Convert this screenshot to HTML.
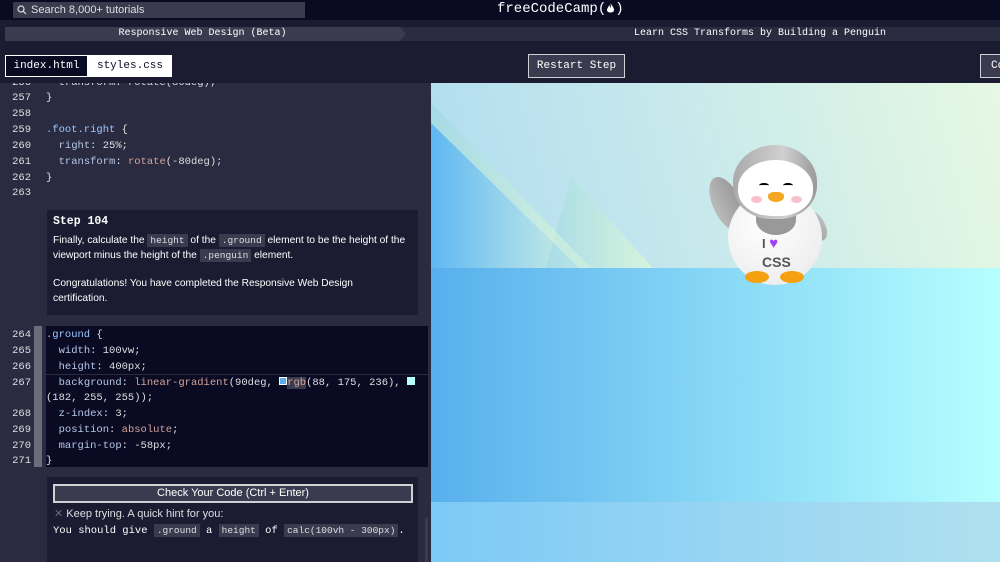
<!DOCTYPE html>
<html><head><meta charset="utf-8"><style>
*{box-sizing:border-box;margin:0;padding:0}
body{width:1000px;height:562px;overflow:hidden;background:#1b1b32;font-family:"Liberation Sans",sans-serif;position:relative}
.abs{position:absolute}
.mono{font-family:"Liberation Mono","DejaVu Sans Mono",monospace}
.c{position:absolute;left:46px;font-family:"Liberation Mono",monospace;font-size:10.5px;color:#dfdfe2;white-space:pre;line-height:16px}
.n{position:absolute;left:0;width:31px;text-align:right;font-family:"Liberation Mono",monospace;font-size:10.5px;color:#dfdfe2;line-height:16px}
.sel{color:#99c9ff}.k{color:#b5c7e8}.f{color:#d4a49a}
.ic{background:#3b3b4f;font-family:"Liberation Mono",monospace;font-size:9.5px;padding:1px 3px;color:#dfdfe2}
</style></head><body>
<div class="abs" style="left:0;top:0;width:1000px;height:20px;background:#0a0a23"></div>
<div class="abs" style="left:13px;top:2px;width:292px;height:16px;background:#3b3b4f;color:#dfdfe2;font-size:11px;line-height:16px;padding-left:18px">Search 8,000+ tutorials</div>
<svg class="abs" style="left:17px;top:5px" width="10" height="10"><circle cx="4" cy="4" r="3" stroke="#dfdfe2" stroke-width="1.2" fill="none"/><path d="M6.3 6.3L9 9" stroke="#dfdfe2" stroke-width="1.2"/></svg>
<div class="abs mono" style="left:497px;top:0;font-size:14px;line-height:19px;color:#fff">freeCodeCamp(<svg width="9" height="11" viewBox="0 0 9 11" style="vertical-align:-1px"><path d="M4.5 0.5C5 3 8 5 8 8C8 10 6 10.5 4.5 10.5C3 10.5 1 10 1 8C1 6 3 5 3 3C4 4 4 5 4.5 6C5 5 5 3 4.5 0.5Z" fill="#fff"/></svg>)</div>
<div class="abs" style="left:5px;top:27px;width:995px;height:14px;background:#2a2a40"></div>
<div class="abs mono" style="left:5px;top:27px;width:395px;height:14px;background:#3b3b4f;color:#fff;font-size:10px;line-height:14px;text-align:center">Responsive Web Design (Beta)</div>
<div class="abs" style="left:400px;top:27px;width:0;height:0;border-top:7px solid transparent;border-bottom:7px solid transparent;border-left:6px solid #3b3b4f"></div>
<div class="abs mono" style="left:520px;top:27px;width:480px;color:#fff;font-size:10px;line-height:14px;text-align:center">Learn CSS Transforms by Building a Penguin</div>
<div class="abs mono" style="left:5px;top:55px;width:83px;height:22px;background:#0a0a23;border:1px solid #fff;color:#fff;font-size:11px;line-height:20px;text-align:center">index.html</div>
<div class="abs mono" style="left:88px;top:55px;width:84px;height:22px;background:#fff;color:#0a0a23;font-size:11px;line-height:22px;text-align:center">styles.css</div>
<div class="abs mono" style="left:528px;top:54px;width:97px;height:24px;background:#3b3b4f;border:1px solid #d0d0d5;color:#fff;font-size:11px;line-height:22px;text-align:center">Restart Step</div>
<div class="abs mono" style="left:980px;top:54px;width:40px;height:24px;background:#3b3b4f;border:1px solid #d0d0d5;color:#fff;font-size:11px;line-height:22px;padding-left:10px">Co</div>
<div class="abs" style="left:0;top:83px;width:431px;height:479px;background:#2a2a40;overflow:hidden">
 <div class="n" style="top:-8px">256</div><div class="c" style="top:-8px">  transform: rotate(80deg);</div>
 <div class="n" style="top:7px">257</div><div class="c" style="top:7px">}</div>
 <div class="n" style="top:23px">258</div>
 <div class="n" style="top:39px">259</div><div class="c" style="top:39px"><span class="sel">.foot.right</span> {</div>
 <div class="n" style="top:55px">260</div><div class="c" style="top:55px">  <span class="k">right</span>: 25%;</div>
 <div class="n" style="top:71px">261</div><div class="c" style="top:71px">  <span class="k">transform</span>: <span class="f">rotate</span>(-80deg);</div>
 <div class="n" style="top:87px">262</div><div class="c" style="top:87px">}</div>
 <div class="n" style="top:102px">263</div>
 <div class="abs" style="left:47px;top:127px;width:371px;height:105px;background:#1b1b32;padding:4px 6px;color:#fff;font-size:10.2px;line-height:15.5px">
  <div class="mono" style="font-weight:bold;font-size:11.5px;margin-bottom:3px">Step 104</div>
  <div>Finally, calculate the <span class="ic">height</span> of the <span class="ic">.ground</span> element to be the height of the viewport minus the height of the <span class="ic">.penguin</span> element.</div>
  <div style="margin-top:12px;padding-right:20px">Congratulations! You have completed the Responsive Web Design certification.</div>
 </div>
 <div class="abs" style="left:46px;top:243px;width:382px;height:141px;background:#0a0a23"></div>
 <div class="abs" style="left:34px;top:243px;width:8px;height:141px;background:#6b6b7a"></div>
 <div class="abs" style="left:46px;top:291px;width:382px;height:1px;background:#2a2a40"></div>
 <div class="n" style="top:244px">264</div><div class="c" style="top:244px"><span class="sel">.ground</span> {</div>
 <div class="n" style="top:260px">265</div><div class="c" style="top:260px">  <span class="k">width</span>: 100vw;</div>
 <div class="n" style="top:276px">266</div><div class="c" style="top:276px">  <span class="k">height</span>: 400px;</div>
 <div class="n" style="top:292px">267</div><div class="c" style="top:292px">  <span class="k">background</span>: <span class="f">linear-gradient</span>(90deg, <span style="display:inline-block;width:8px;height:8px;background:#58afec;border:1px solid #fff"></span><span class="f" style="background:#3b3b4f">rgb</span>(88, 175, 236), <span style="display:inline-block;width:8px;height:8px;background:#b6ffff"></span></div>
 <div class="c" style="top:307px">(182, 255, 255));</div>
 <div class="n" style="top:323px">268</div><div class="c" style="top:323px">  <span class="k">z-index</span>: 3;</div>
 <div class="n" style="top:339px">269</div><div class="c" style="top:339px">  <span class="k">position</span>: <span class="f">absolute</span>;</div>
 <div class="n" style="top:355px">270</div><div class="c" style="top:355px">  <span class="k">margin-top</span>: -58px;</div>
 <div class="n" style="top:370px">271</div><div class="c" style="top:370px">}</div>
 <div class="abs" style="left:47px;top:394px;width:371px;height:90px;background:#1b1b32"></div>
 <div class="abs" style="left:53px;top:401px;width:360px;height:19px;background:#3b3b4f;border:2px solid #d0d0d5;color:#fff;font-size:11px;line-height:15px;text-align:center">Check Your Code (Ctrl + Enter)</div>
 <div class="abs" style="left:54px;top:424px;color:#dfdfe2;font-size:11px"><span style="color:#6b6b7a">✕</span> Keep trying. A quick hint for you:</div>
 <div class="abs mono" style="left:53px;top:442px;color:#fff;font-size:10.5px;white-space:pre">You should give <span class="ic">.ground</span> a <span class="ic">height</span> of <span class="ic">calc(100vh - 300px)</span>.</div>
 <div class="abs" style="left:425px;top:435px;width:3px;height:44px;background:#3b3b4f"></div>
</div>
<div class="abs" style="left:431px;top:83px;width:569px;height:479px;overflow:hidden;background:linear-gradient(75deg,#a9d9f0,#c6e8ec 50%,#e6f8e2)">
 <svg class="abs" style="left:0;top:0" width="569" height="190">
  <defs><linearGradient id="m1" x1="0" y1="0" x2="1" y2="0"><stop offset="0" stop-color="#5fb8f2"/><stop offset="0.6" stop-color="#a8dcea"/><stop offset="1" stop-color="#d4f2dc"/></linearGradient>
  <linearGradient id="m2" x1="0" y1="0" x2="1" y2="0"><stop offset="0" stop-color="#a9dce8"/><stop offset="1" stop-color="#d6f4dc"/></linearGradient></defs>
  <polygon points="0,20 160,185 0,185" fill="url(#m1)"/>
  <polygon points="115,185 140,95 222,185" fill="url(#m2)"/>
  <polygon points="0,20 160,185 148,185 0,40" fill="#d6f2dc" opacity=".6"/>
 </svg>
 <div class="abs" style="left:0;top:185px;width:569px;height:234px;background:linear-gradient(90deg,#58afec,#b6ffff)"></div>
 <div class="abs" style="left:0;top:419px;width:569px;height:60px;background:linear-gradient(90deg,#7dc9f6,#b0e0ef)"></div>
 <div class="abs" style="left:282px;top:92px;width:28px;height:58px;border-radius:50%;background:linear-gradient(90deg,#bbb,#999);transform:rotate(-25deg)"></div>
 <div class="abs" style="left:373px;top:124px;width:20px;height:36px;border-radius:50%;background:linear-gradient(90deg,#999,#bbb);transform:rotate(-35deg)"></div>
 <div class="abs" style="left:297px;top:107px;width:94px;height:95px;border-radius:50%;background:radial-gradient(circle at 40% 35%,#fff,#e8e8ea)"></div>
 <div class="abs" style="left:325px;top:122px;width:40px;height:30px;border-radius:0 0 50% 50%;background:#999"></div>
 <div class="abs" style="left:302px;top:62px;width:84px;height:74px;border-radius:50% 50% 45% 45%;background:linear-gradient(90deg,#aaa,#d0d0d0 60%,#999)"></div>
 <div class="abs" style="left:307px;top:77px;width:75px;height:56px;border-radius:50% 50% 45% 45%;background:#fff"></div>
 <div class="abs" style="left:328px;top:100px;width:10px;height:5px;border-top:2px solid #000;border-radius:50% 50% 0 0"></div>
 <div class="abs" style="left:352px;top:100px;width:10px;height:5px;border-top:2px solid #000;border-radius:50% 50% 0 0"></div>
 <div class="abs" style="left:337px;top:109px;width:16px;height:10px;border-radius:40% 40% 50% 50%;background:#f5a623"></div>
 <div class="abs" style="left:320px;top:113px;width:11px;height:7px;border-radius:50%;background:#f9c0cc"></div>
 <div class="abs" style="left:360px;top:113px;width:11px;height:7px;border-radius:50%;background:#f9c0cc"></div>
 <div class="abs" style="left:331px;top:152px;font-size:13px;color:#555;font-weight:bold">I <span style="color:#a040f0;font-size:15px">♥</span></div>
 <div class="abs" style="left:331px;top:171px;font-size:14px;color:#555;font-weight:bold">CSS</div>
 <div class="abs" style="left:314px;top:188px;width:24px;height:12px;border-radius:50%;background:#f5a010"></div>
 <div class="abs" style="left:349px;top:188px;width:24px;height:12px;border-radius:50%;background:#f5a010"></div>
</div>
</body></html>
